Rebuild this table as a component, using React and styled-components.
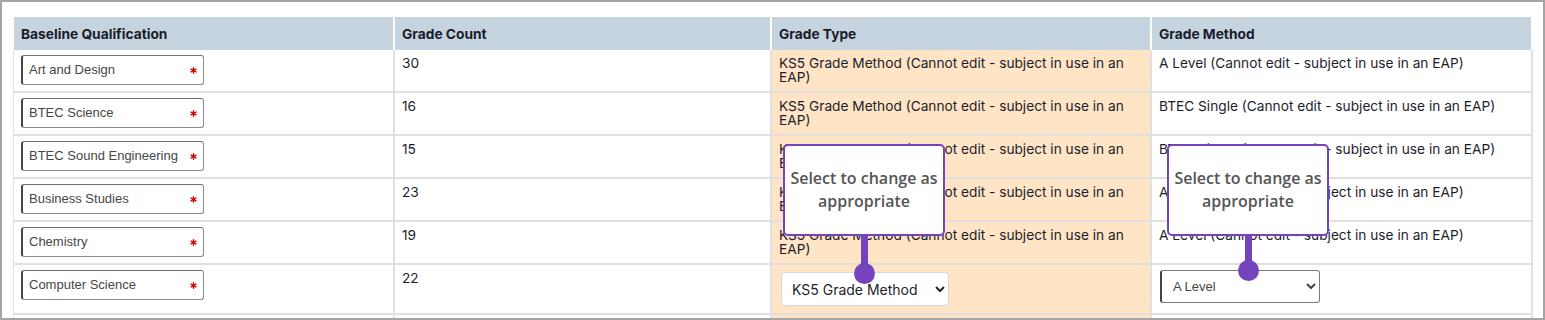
import React from "react";
import styled, { createGlobalStyle } from "styled-components";

const GlobalStyle = createGlobalStyle`
  body {
    margin: 0;
    background: #fff;
    font-family: Inter, "Liberation Sans", sans-serif;
  }
  * { box-sizing: border-box; }
`;

const LOCKED = "(Cannot edit - subject in use in an EAP)";

const subjects = [
  { name: "Art and Design", count: 30, type: "KS5 Grade Method", method: "A Level" },
  { name: "BTEC Science", count: 16, type: "KS5 Grade Method", method: "BTEC Single" },
  { name: "BTEC Sound Engineering", count: 15, type: "KS5 Grade Method", method: "BTEC Single" },
  { name: "Business Studies", count: 23, type: "KS5 Grade Method", method: "A Level" },
  { name: "Chemistry", count: 19, type: "KS5 Grade Method", method: "A Level" },
];

const Asterisk = () => (
  <svg width="7" height="7" viewBox="0 0 10 10">
    <g stroke="#d40000" strokeWidth="2" strokeLinecap="round">
      <line x1="5" y1="1" x2="5" y2="9" />
      <line x1="1.5" y1="3" x2="8.5" y2="7" />
      <line x1="1.5" y1="7" x2="8.5" y2="3" />
    </g>
  </svg>
);

const App = () => {
  return (
    <>
      <GlobalStyle />
      <Frame>
        <Table>
          <thead>
            <tr>
              <Th $w={382}>Baseline Qualification</Th>
              <Th $w={377}>Grade Count</Th>
              <Th $w={380}>Grade Type</Th>
              <Th $w={381}>Grade Method</Th>
            </tr>
          </thead>
          <tbody>
            {subjects.map((s) => (
              <tr key={s.name}>
                <Td>
                  <Field>
                    <span>{s.name}</span>
                    <Asterisk />
                  </Field>
                </Td>
                <Td>{s.count}</Td>
                <Td $tint>
                  {s.type} {LOCKED}
                </Td>
                <Td>
                  {s.method} {LOCKED}
                </Td>
              </tr>
            ))}
            <tr>
              <Td>
                <Field>
                  <span>Computer Science</span>
                  <Asterisk />
                </Field>
              </Td>
              <Td>22</Td>
              <Td $tint>
                <Anchor $mt={1} $ml={2} $mb={1}>
                  <Select defaultValue="ks5">
                    <option value="ks5">KS5 Grade Method</option>
                    <option value="ks4">KS4 Grade Method</option>
                  </Select>
                  <Callout $left={2} $top={-128}>
                    <Bubble>
                      Select to change as
                      <br />
                      appropriate
                    </Bubble>
                    <Stem $h={28} />
                    <Dot />
                  </Callout>
                </Anchor>
              </Td>
              <Td>
                <Anchor $mt={-1} $ml={1}>
                  <Select $classic defaultValue="alevel">
                    <option value="alevel">A Level</option>
                    <option value="btec">BTEC Single</option>
                  </Select>
                  <Callout $left={7} $top={-126}>
                    <Bubble>
                      Select to change as
                      <br />
                      appropriate
                    </Bubble>
                    <Stem $h={25} />
                    <Dot />
                  </Callout>
                </Anchor>
              </Td>
            </tr>
            <tr>
              <Td>
                <Field>
                  <span>Drama</span>
                  <Asterisk />
                </Field>
              </Td>
              <Td>12</Td>
              <Td $tint>KS5 Grade Method {LOCKED}</Td>
              <Td>A Level {LOCKED}</Td>
            </tr>
          </tbody>
        </Table>
      </Frame>
    </>
  );
};

export default App;

const Frame = styled.div`
  height: 320px;
  border: 2px solid #a4a4a4;
  padding: 15px 0 0 11px;
  overflow: hidden;
`;

const Table = styled.table`
  width: 1520px;
  table-layout: fixed;
  border-collapse: separate;
  border-spacing: 0;
`;

const Th = styled.th`
  width: ${(p) => p.$w}px;
  background: #c6d4df;
  color: #1a1d2b;
  font: 700 13.75px/16px Inter, "Liberation Sans", sans-serif;
  text-align: left;
  padding: 9px 7px 8px;
  border-right: 2px solid #fff;
  &:first-child {
    border-left: 1px solid #fff;
  }
`;

const Td = styled.td`
  background: ${(p) => (p.$tint ? "#ffe4c6" : "#fff")};
  color: #1c1e2b;
  font: 400 13.7px/14px Inter, "Liberation Sans", sans-serif;
  vertical-align: top;
  padding: 6px 7px 6px;
  border-right: 2px solid #e0e0e0;
  border-bottom: 2px solid #e0e0e0;
  &:first-child {
    border-left: 1px solid #e0e0e0;
  }
`;

const Field = styled.div`
  display: flex;
  align-items: center;
  justify-content: space-between;
  width: 183px;
  height: 30px;
  margin-top: -1px;
  padding: 0 6px;
  border: 1px solid #8c8c8c;
  border-top-color: #707070;
  border-left: 2px solid #464646;
  border-radius: 3px;
  background: #fff;
  color: #464646;
  font: 13px/16px "Liberation Sans", Arial, sans-serif;
`;

const Anchor = styled.div`
  position: relative;
  display: inline-block;
  vertical-align: top;
  margin-top: ${(p) => p.$mt || 0}px;
  margin-left: ${(p) => p.$ml || 0}px;
  margin-bottom: ${(p) => p.$mb || 0}px;
`;

const Select = styled.select`
  display: block;
  width: ${(p) => (p.$classic ? 160 : 168)}px;
  height: ${(p) => (p.$classic ? 33 : 34)}px;
  padding: 0 4px 0 ${(p) => (p.$classic ? 7 : 6)}px;
  background: #fff;
  border: 1px solid ${(p) => (p.$classic ? "#7a7a7a" : "#d3d8de")};
  border-left: ${(p) => (p.$classic ? "2px solid #444" : "1px solid #d3d8de")};
  border-radius: ${(p) => (p.$classic ? 3 : 4)}px;
  color: ${(p) => (p.$classic ? "#454545" : "#212529")};
  font: ${(p) =>
    p.$classic
      ? '13px "Liberation Sans", Arial, sans-serif'
      : "14px Inter, sans-serif"};
  outline: none;
`;

const Callout = styled.div`
  position: absolute;
  left: ${(p) => p.$left}px;
  top: ${(p) => p.$top}px;
  width: 162px;
  display: flex;
  flex-direction: column;
  align-items: center;
  pointer-events: none;
  z-index: 2;
`;

const Bubble = styled.div`
  width: 162px;
  height: 92px;
  display: flex;
  align-items: center;
  justify-content: center;
  text-align: center;
  background: #fff;
  border: 2px solid #7543bb;
  border-radius: 5px;
  color: #555;
  font: 600 16px/23px "Open Sans", Lato, sans-serif;
`;

const Stem = styled.div`
  width: 7px;
  height: ${(p) => p.$h}px;
  background: #7543bb;
`;

const Dot = styled.div`
  width: 21px;
  height: 21px;
  margin-top: -1px;
  border-radius: 50%;
  background: #7543bb;
`;
